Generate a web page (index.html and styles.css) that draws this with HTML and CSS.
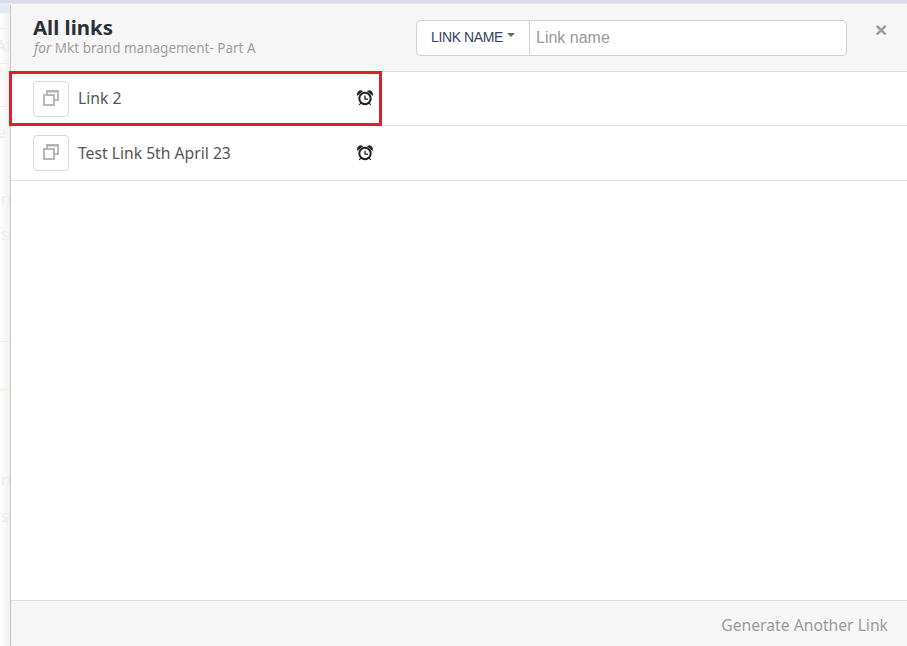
FILE: index.html
```html
<!DOCTYPE html>
<html lang="en">
<head>
<meta charset="utf-8">
<title>All links</title>
<link rel="stylesheet" href="styles.css">
</head>
<body>
<div class="topbar"></div>
<div class="stage">
  <aside class="backdrop">
    <span class="nav"></span>
    <span class="rule r1"></span>
    <span class="ghost g1">AM</span>
    <span class="rule r2"></span>
    <span class="rule r3"></span>
    <span class="ghost g2">e</span>
    <span class="ghost g3">on</span>
    <span class="ghost g4">st</span>
    <span class="rule r4"></span>
    <span class="tint"></span>
    <span class="ghost g5">on</span>
    <span class="ghost g6">st</span>
  </aside>
  <main class="modal">
    <header class="head">
      <div class="titles">
        <h1 class="title">All links</h1>
        <p class="sub"><em>for</em> Mkt brand management- Part A</p>
      </div>
      <div class="search">
        <button class="drop">LINK NAME<span class="caret"></span></button>
        <input class="field" type="text" placeholder="Link name">
      </div>
      <span class="close">&times;</span>
    </header>
    <div class="rows">
      <div class="row first">
        <span class="tile">
          <svg class="stack" width="18" height="18" viewBox="0 0 18 18"><path class="win" d="M5 6V2h11v9h-3"/><path class="bar" d="M5 2.500h11"/><rect class="win" x="2" y="6" width="10" height="10"/></svg>
        </span>
        <span class="name">Link 2</span>
        <svg class="alarm" width="16" height="16" viewBox="0 0 16 16"><circle class="ring" cx="8" cy="8.500" r="5.700"/><path class="hand" d="M8 5.500V9.200h3"/><path class="bell" d="M0.800 4.800C0.400 2 2.500 0.400 5 1.200ZM15.200 4.800C15.600 2 13.500 0.400 11 1.200ZM3.700 13L2.300 15M12.300 13L13.700 15"/></svg>
      </div>
      <div class="row">
        <span class="tile">
          <svg class="stack" width="18" height="18" viewBox="0 0 18 18"><path class="win" d="M5 6V2h11v9h-3"/><path class="bar" d="M5 2.500h11"/><rect class="win" x="2" y="6" width="10" height="10"/></svg>
        </span>
        <span class="name">Test Link 5th April 23</span>
        <svg class="alarm" width="16" height="16" viewBox="0 0 16 16"><circle class="ring" cx="8" cy="8.500" r="5.700"/><path class="hand" d="M8 5.500V9.200h3"/><path class="bell" d="M0.800 4.800C0.400 2 2.500 0.400 5 1.200ZM15.200 4.800C15.600 2 13.500 0.400 11 1.200ZM3.700 13L2.300 15M12.300 13L13.700 15"/></svg>
      </div>
      <div class="highlight"></div>
    </div>
    <footer class="foot"><a class="generate">Generate Another Link</a></footer>
  </main>
</div>
</body>
</html>
```

FILE: styles.css
```css
html, body { margin: 0; padding: 0; height: 100%; overflow: hidden; }
body {
  display: flex;
  flex-direction: column;
  background: #fbfbfb;
  font-family: "Noto Sans", "Open Sans", sans-serif;
}
.topbar { height: 3px; background: #d8dde7; flex: none; }
.stage { flex: 1; display: flex; min-height: 0; }
.backdrop {
  width: 10px;
  flex: none;
  position: relative;
  overflow: hidden;
  background: linear-gradient(90deg, #fefefe, #f1f1f1);
}
.nav { position: absolute; top: 0; left: 0; width: 10px; height: 10px; background: #e6ebf3; }
.ghost { position: absolute; color: #ececec; font-size: 16px; line-height: 20px; }
.g1 { top: 33px; left: -4px; }
.g2 { top: 119px; left: -3px; }
.g3 { top: 186px; left: -9px; }
.g4 { top: 221px; left: 1px; }
.g5 { top: 467px; left: -9px; }
.g6 { top: 503px; left: 1px; }
.rule { position: absolute; left: 0; width: 10px; height: 1px; background: #eeeeee; }
.r1 { top: 25px; }
.r2 { top: 60px; }
.r3 { top: 103px; }
.r4 { top: 338px; }
.tint { position: absolute; top: 385px; left: 0; width: 10px; height: 3px; background: #f8f0e4; }
.modal {
  flex: 1;
  min-width: 0;
  display: flex;
  flex-direction: column;
  border-left: 1px solid #c8c8c8;
  border-top: 1px solid #e4e4e4;
  border-top-left-radius: 4px;
  background: #fff;
}
.head {
  height: 67px;
  flex: none;
  display: flex;
  align-items: flex-start;
  background: #f6f6f6;
  border-bottom: 1px solid #e0e0e0;
  padding-left: 22px;
}
.titles { width: 383px; flex: none; padding-top: 10px; }
.title { margin: 0; font-size: 20.400px; line-height: 27px; font-weight: 700; color: #2b2f38; }
.sub { margin: 0; padding-left: 1px; font-size: 13.500px; line-height: 15px; color: #a0a0a0; }
.sub em { font-style: italic; color: #999; }
.search { display: flex; margin-top: 16px; width: 431px; height: 36px; flex: none; }
.drop {
  width: 114px;
  flex: none;
  display: flex;
  align-items: center;
  justify-content: center;
  padding: 0 0 2px;
  background: #fff;
  border: 1px solid #ced2da;
  border-radius: 5px 0 0 5px;
  color: #383f68;
  font: 14px/20px "Liberation Sans", Arial, sans-serif;
  letter-spacing: -0.4px;
}
.caret {
  width: 0;
  height: 0;
  margin: 0 0 4px 4px;
  border-top: 4px solid #666;
  border-left: 4px solid transparent;
  border-right: 4px solid transparent;
}
.field {
  flex: 1;
  min-width: 0;
  box-sizing: border-box;
  margin: 0;
  padding: 0 6px;
  background: #fff;
  border: 1px solid #cfcfcf;
  border-left: 0;
  border-radius: 0 5px 5px 0;
  font: 16px "Liberation Sans", Arial, sans-serif;
  color: #555;
  outline: none;
}
.field::placeholder { color: #999; opacity: 1; }
.close {
  margin-left: 28px;
  margin-top: 12px;
  font: 700 21px/28px "Liberation Sans", Arial, sans-serif;
  color: #9a9a9a;
}
.rows { flex: 1; min-height: 0; position: relative; }
.row {
  display: flex;
  align-items: center;
  height: 54px;
  border-bottom: 1px solid #e0e0e0;
  padding-left: 22px;
}
.row.first { height: 53px; }
.row.first .name { margin-bottom: 2px; }
.tile {
  width: 34px;
  height: 34px;
  flex: none;
  display: flex;
  align-items: center;
  justify-content: center;
  border: 1px solid #d8d8de;
  border-radius: 4px;
  background: #fff;
}
.stack { margin-bottom: 2px; }
.win { fill: #fff; stroke: #b8b8b8; stroke-width: 2; }
.bar { fill: none; stroke: #b0b0b0; stroke-width: 2; }
.name {
  width: 279px;
  flex: none;
  margin-left: 9px;
  font-size: 15.700px;
  color: #555;
}
.alarm { flex: none; margin-bottom: 1px; }
.ring { fill: #fff; stroke: #222; stroke-width: 2; }
.hand { fill: none; stroke: #222; stroke-width: 1.300; }
.bell { fill: #222; stroke: #222; stroke-width: 1.200; }
.highlight {
  position: absolute;
  left: -2px;
  top: -1px;
  width: 367px;
  height: 49px;
  border: 3px solid #e01f2b;
  pointer-events: none;
}
.foot {
  height: 46px;
  flex: none;
  display: flex;
  align-items: center;
  justify-content: flex-end;
  padding-right: 19px;
  padding-top: 2px;
  box-sizing: border-box;
  background: #f6f6f6;
  border-top: 1px solid #e0e0e0;
}
.generate { font-size: 15.700px; color: #9b9b9b; }
```
